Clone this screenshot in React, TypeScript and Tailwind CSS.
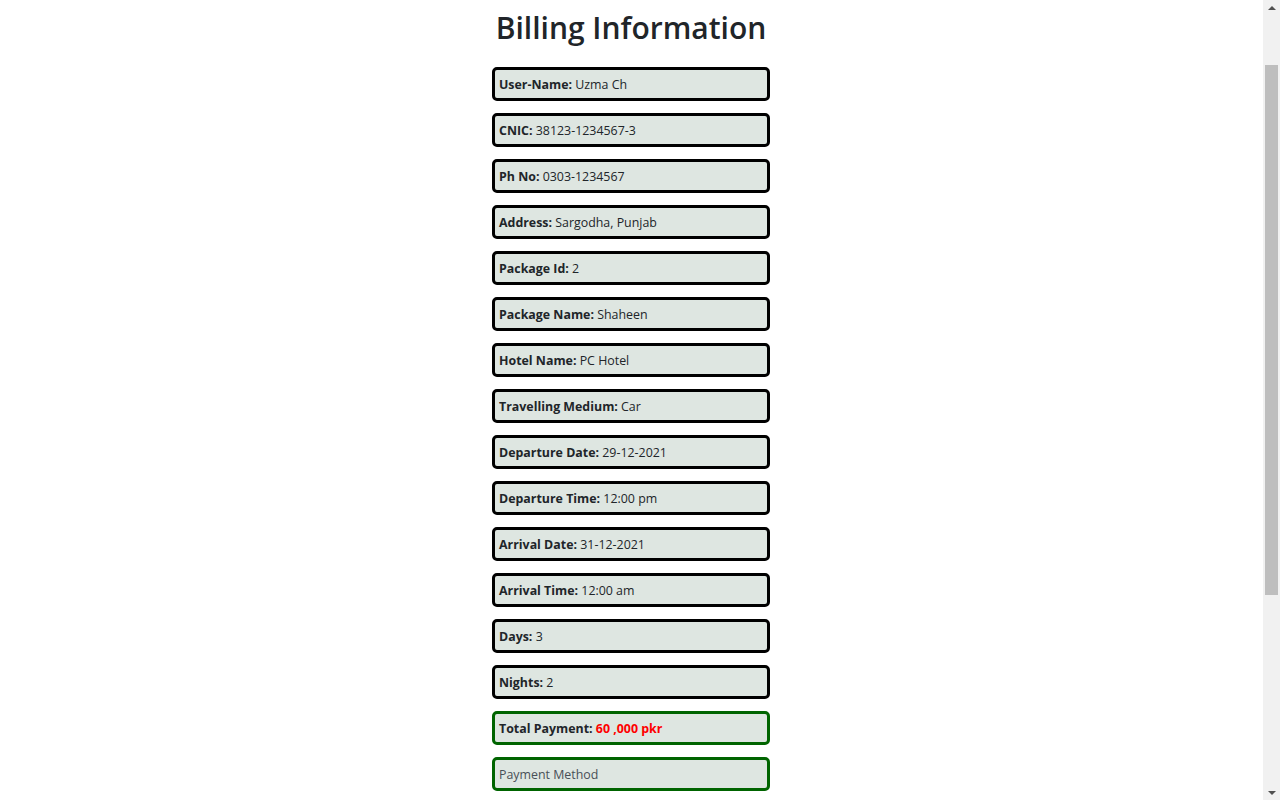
const rows: { label: string; value: string }[] = [
  { label: "User-Name:", value: "Uzma Ch" },
  { label: "CNIC:", value: "38123-1234567-3" },
  { label: "Ph No:", value: "0303-1234567" },
  { label: "Address:", value: "Sargodha, Punjab" },
  { label: "Package Id:", value: "2" },
  { label: "Package Name:", value: "Shaheen" },
  { label: "Hotel Name:", value: "PC Hotel" },
  { label: "Travelling Medium:", value: "Car" },
  { label: "Departure Date:", value: "29-12-2021" },
  { label: "Departure Time:", value: "12:00 pm" },
  { label: "Arrival Date:", value: "31-12-2021" },
  { label: "Arrival Time:", value: "12:00 am" },
  { label: "Days:", value: "3" },
  { label: "Nights:", value: "2" },
];

function ScrollRail() {
  return (
    <div className="flex h-[800px] w-[17px] shrink-0 flex-col items-center bg-[#f1f1f1]">
      <div className="flex h-[15px] w-full items-center justify-center">
        <span className="h-0 w-0 border-x-[4px] border-b-[4px] border-x-transparent border-b-[#505050]" />
      </div>
      <div className="mt-[50px] h-[530px] w-[13px] bg-[#bebebe]" />
      <div className="flex-1" />
      <div className="flex h-[15px] w-full items-center justify-center">
        <span className="h-0 w-0 border-x-[4px] border-t-[4px] border-x-transparent border-t-[#505050]" />
      </div>
    </div>
  );
}

export default function App() {
  return (
    <div className="flex h-[800px] overflow-hidden bg-white font-['Open_Sans',sans-serif] text-[#212529]">
      <div className="flex-1 pr-[1px]">
        <div className="mx-auto flex w-[278px] flex-col items-center pt-[6px]">
          <h1 className="whitespace-nowrap text-[30px] font-semibold leading-[44px]">Billing Information</h1>

          <div className="mt-[17px] flex w-full flex-col gap-[12px]">
            {rows.map((r) => (
              <div
                key={r.label}
                className="h-[34px] rounded-[5px] border-[3px] border-black bg-[#dee6e1] px-[4px] text-[12.4px] leading-[29px]"
              >
                <b className="font-bold">{r.label}</b> {r.value}
              </div>
            ))}

            {/* total */}
            <div className="h-[34px] rounded-[5px] border-[3px] border-[#006400] bg-[#dee6e1] px-[4px] text-[12.4px] leading-[29px]">
              <b className="font-bold">Total Payment:</b>{" "}
              <b className="font-bold text-[#ff0000]">60 ,000 pkr</b>
            </div>

            <div className="h-[34px] rounded-[5px] border-[3px] border-[#006400] bg-[#dee6e1] px-[4px] text-[12.4px] leading-[29px] text-[#495057]">
              Payment Method
            </div>
          </div>
        </div>
      </div>
      <ScrollRail />
    </div>
  );
}
